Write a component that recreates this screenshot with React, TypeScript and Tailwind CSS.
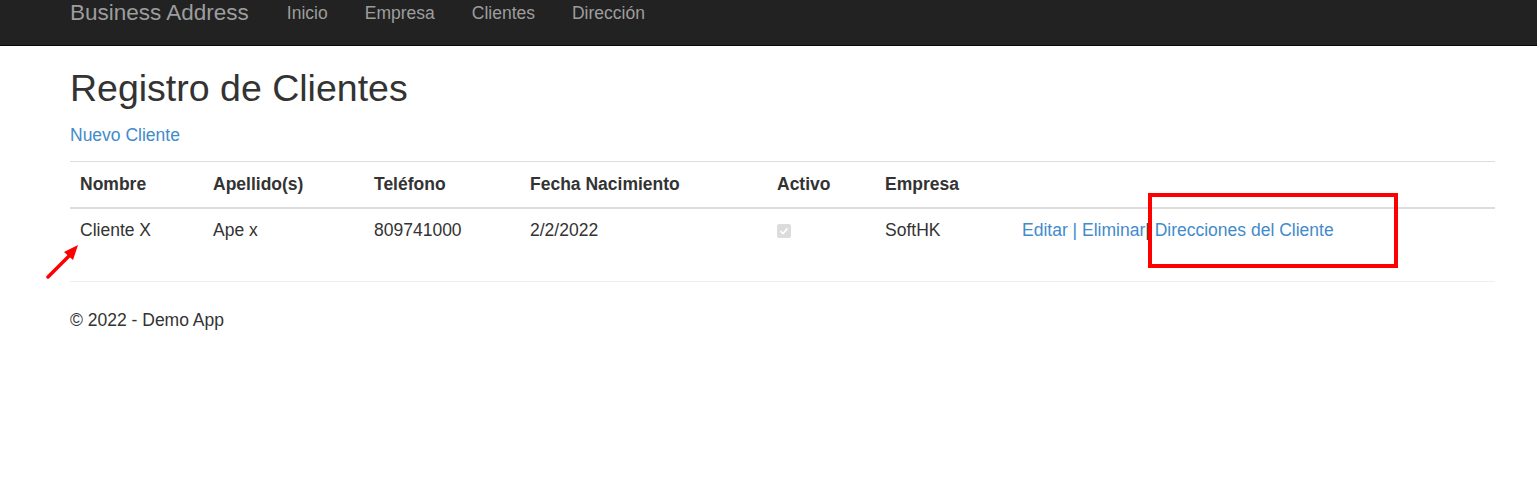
export default function App() {
  const cols = [
    { label: "Nombre", w: "w-[133px]" },
    { label: "Apellido(s)", w: "w-[161px]" },
    { label: "Teléfono", w: "w-[156px]" },
    { label: "Fecha Nacimiento", w: "w-[247px]" },
    { label: "Activo", w: "w-[108px]" },
    { label: "Empresa", w: "w-[137px]" },
    { label: "", w: "flex-1" },
  ];

  return (
    <div className="relative min-h-[486px] bg-white text-[17.5px] text-[#333] font-['Liberation_Sans',Arial,sans-serif]">
      {/* navbar */}
      <nav className="h-[46px] bg-[#222] border-b border-[#080808]">
        <div className="flex h-[26px] items-center pl-[70px] text-[#9d9d9d]">
          <span className="text-[22.5px] leading-[26px] mr-[38px]">Business Address</span>
          <div className="flex gap-[37px]">
            <a>Inicio</a>
            <a>Empresa</a>
            <a>Clientes</a>
            <a>Dirección</a>
          </div>
        </div>
      </nav>

      <main className="pl-[70px] pr-[42px]">
        <h2 className="mt-[22px] text-[37.5px] leading-[41px]">Registro de Clientes</h2>
        <p className="mt-[14px] leading-[25px]">
          <a className="text-[#428bca]">Nuevo Cliente</a>
        </p>

        <div className="mt-[13px] border-t border-[#ddd]">
          <div className="flex border-b-2 border-[#ddd] font-bold">
            {cols.map((c, i) => (
              <div key={i} className={`${c.w} px-[10px] py-[10px] leading-[25px]`}>
                {c.label}
              </div>
            ))}
          </div>
          <div className="flex pt-[9px] pb-[11px]">
            <div className="w-[133px] px-[10px] leading-[25px]">Cliente X</div>
            <div className="w-[161px] px-[10px] leading-[25px]">Ape x</div>
            <div className="w-[156px] px-[10px] leading-[25px]">809741000</div>
            <div className="w-[247px] px-[10px] leading-[25px]">2/2/2022</div>
            <div className="w-[108px] px-[10px] leading-[25px] flex items-center">
              <span className="flex h-[14px] w-[14px] items-center justify-center rounded-[2px] bg-[#dcdcdc]">
                <svg width="10" height="10" viewBox="0 0 10 10" fill="none">
                  <path d="M1.5 5.2 L4 7.6 L8.6 2.4" stroke="white" strokeWidth="1.6" />
                </svg>
              </span>
            </div>
            <div className="w-[137px] px-[10px] leading-[25px]">SoftHK</div>
            <div className="flex-1 px-[10px] leading-[25px]">
              <a className="text-[#428bca]">Editar</a>
              <span className="text-[#428bca]"> | </span>
              <a className="text-[#428bca]">Eliminar</a>|{" "}
              <a className="text-[#428bca]">Direcciones del Cliente</a>
            </div>
          </div>
        </div>

        <hr className="mt-[27px] border-t border-[#eee]" />
        <footer className="mt-[26px] leading-[25px]">© 2022 - Demo App</footer>
      </main>

      {/* annotations */}
      <div className="absolute left-[1148px] top-[193px] h-[75px] w-[250px] border-[4px] border-[#ff0000]" />
      <svg className="absolute left-[40px] top-[240px]" width="50" height="45" viewBox="0 0 50 45">
        <path d="M8 37 L31 14" stroke="#ff0000" strokeWidth="3.5" strokeLinecap="round" />
        <path d="M38 5 L24 12 L33 20 Z" fill="#ff0000" />
      </svg>
    </div>
  );
}
